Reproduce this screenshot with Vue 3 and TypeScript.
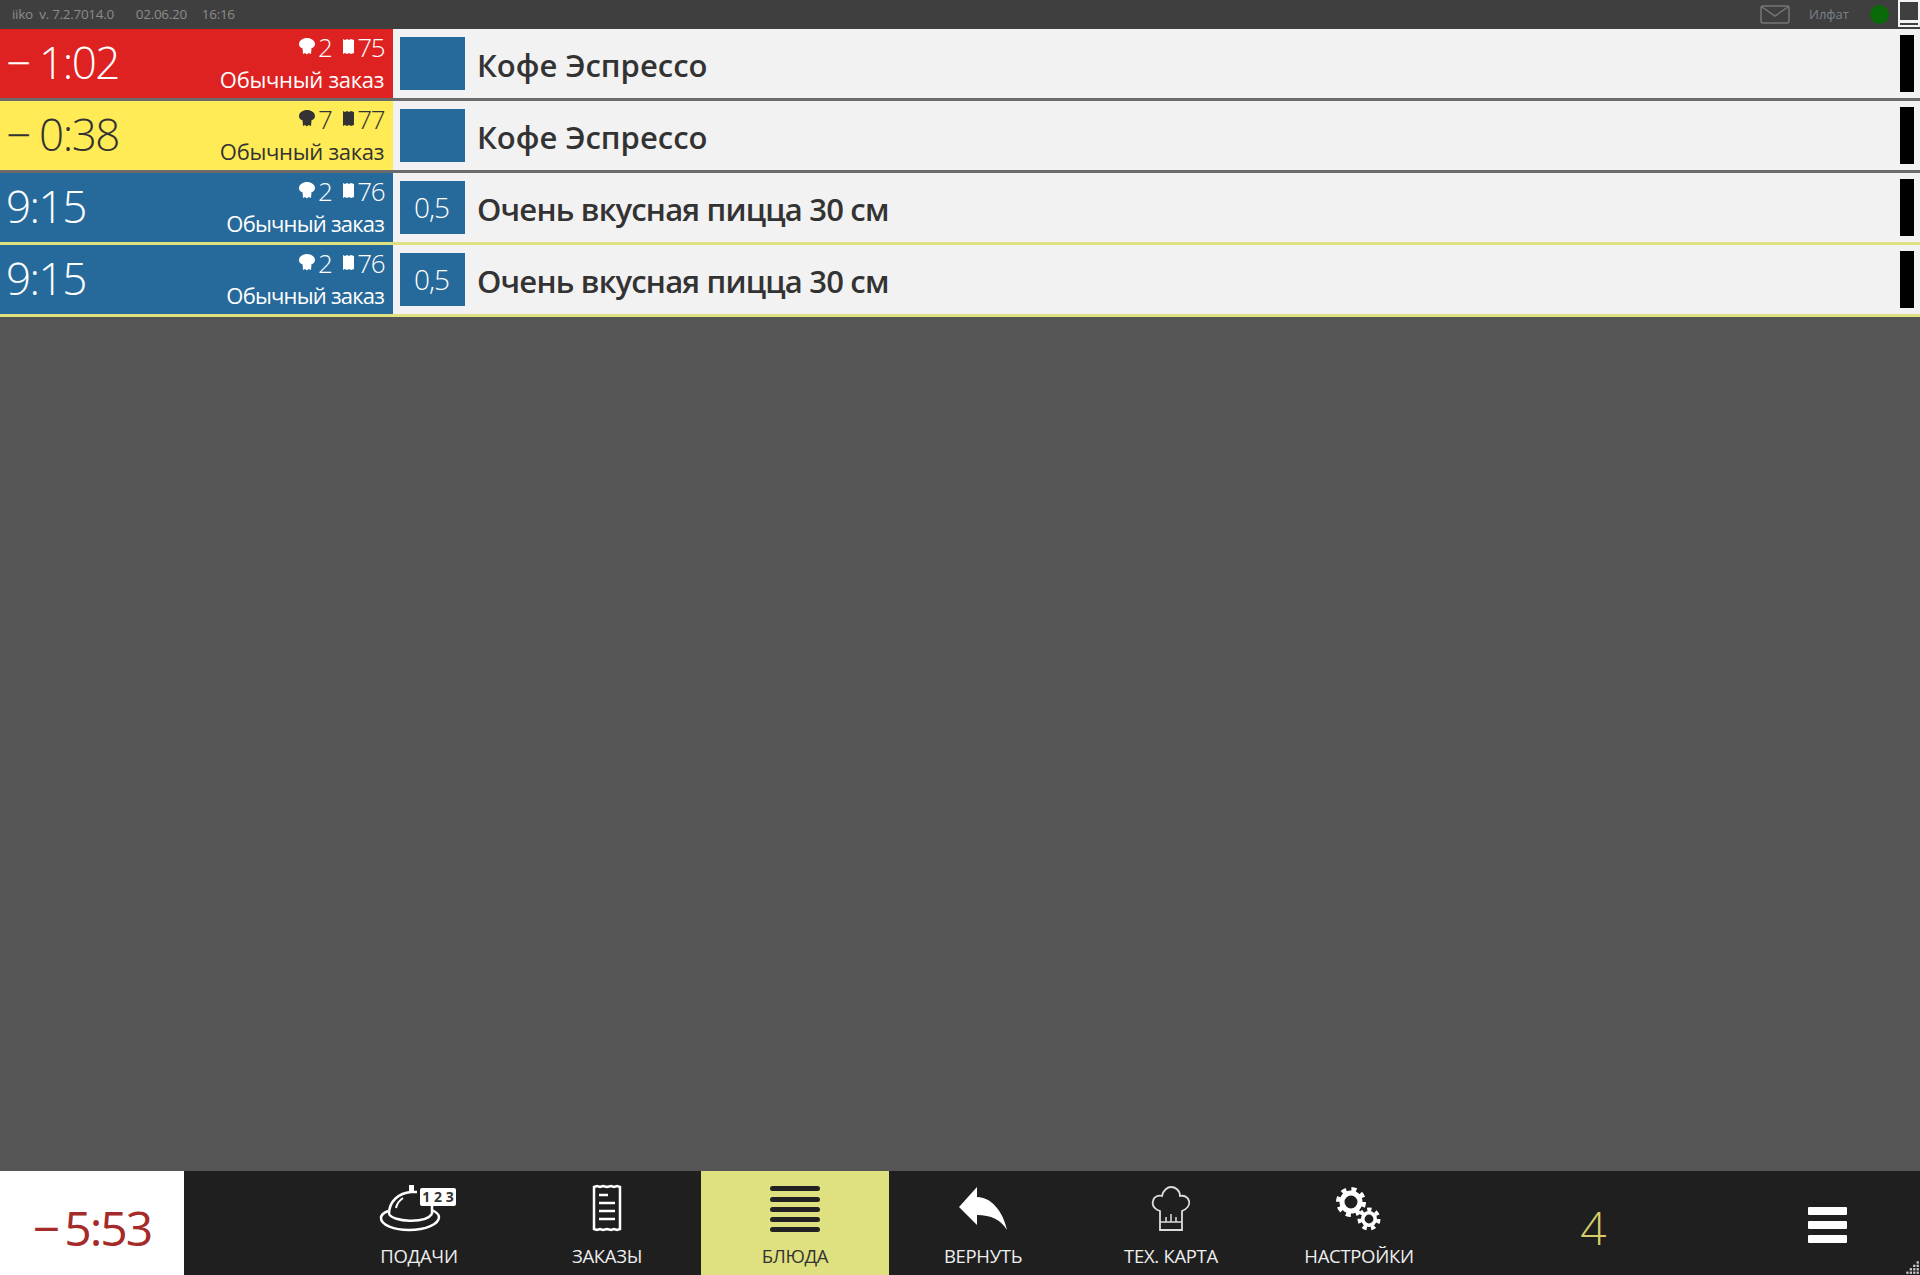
<template>
  <div class="screen">
    <header class="topbar">
      <div class="version">
        <span>iiko&nbsp; v. 7.2.7014.0</span>
        <span class="date">02.06.20</span>
        <span class="clock">16:16</span>
      </div>
      <div class="status">
        <svg class="mail" width="30" height="19" viewBox="0 0 30 19">
          <rect x="1" y="1" width="28" height="17" rx="2" fill="none" stroke="#777" stroke-width="1.5" />
          <path d="M2 2 L15 11 L28 2" fill="none" stroke="#777" stroke-width="1.5" />
        </svg>
        <span class="user">Илфат</span>
        <span class="online"></span>
        <span class="win-btn"><i></i></span>
      </div>
    </header>

    <main class="dishes">
      <div v-for="(row, i) in rows" :key="i" class="row" :class="row.sep">
        <div class="info" :class="row.color">
          <div class="time">{{ row.time }}</div>
          <div class="meta">
            <div class="numbers">
              <svg class="chef" width="16" height="17" viewBox="0 0 16 17">
                <path d="M8 0 C12 0 16 2.500 16 6 C16 8.500 14 10 12.500 10.300 L12 16 L9.500 15 L8 16.500 L6 15 L4 16 L3.500 10.300 C1.500 10 0 8.500 0 6 C0 2.500 4 0 8 0 Z" fill="currentColor" />
              </svg>
              <span class="num">{{ row.guests }}</span>
              <svg class="ticket" width="11" height="15" viewBox="0 0 11 15">
                <path d="M0 0 L2 1 L4 0 L6 1 L8 0 L11 1 L11 14 L8 15 L6 14 L4 15 L2 14 L0 15 Z" fill="currentColor" />
              </svg>
              <span class="num">{{ row.order }}</span>
            </div>
            <div class="kind">Обычный заказ</div>
          </div>
        </div>
        <div class="dish">
          <div class="qty">{{ row.qty }}</div>
          <div class="name">{{ row.name }}</div>
          <div class="marker"></div>
        </div>
      </div>
    </main>

    <footer class="bottom">
      <div class="timer">−&#8201;5:53</div>
      <nav class="nav">
        <div v-for="item in nav" :key="item.label" class="nav-item" :class="{ active: item.icon === 'dishes' }">
          <svg v-if="item.icon === 'bell'" width="120" height="60" viewBox="0 5 120 60">
            <path d="M29 41 C24 43 22 45 22 48 C22 55 35 60 50 60 C67 60 80 54 80 47 C80 44 77 42 73 40" fill="none" stroke="#fff" stroke-width="2.500" />
            <path d="M30 44 C34 52 66 54 73 44" fill="none" stroke="#fff" stroke-width="2.500" />
            <path d="M30 44 C30 31 40 23 52 22 L58 22" fill="none" stroke="#fff" stroke-width="2.500" />
            <path d="M73 36 V44" fill="none" stroke="#fff" stroke-width="2.500" />
            <path d="M37 38 C38 33 41 30 44 28" fill="none" stroke="#fff" stroke-width="2" />
            <rect x="50" y="15" width="5" height="6" fill="#fff" />
            <rect x="61" y="18" width="36" height="18" rx="2" fill="#fff" />
            <text x="79" y="32" class="bell-num" text-anchor="middle">1 2 3</text>
          </svg>
          <svg v-else-if="item.icon === 'orders'" width="34" height="60" viewBox="0 0 34 60">
            <path d="M4 12 L7 11 L10 12 L13 11 L17 12 L21 11 L24 12 L27 11 L30 12 V54 L27 55 L24 54 L21 55 L17 54 L13 55 L10 54 L7 55 L4 54 Z" fill="none" stroke="#fff" stroke-width="2.500" />
            <path d="M9 20 H18 M9 28 H25 M9 36 H25 M9 44 H25" stroke="#fff" stroke-width="2.500" />
          </svg>
          <svg v-else-if="item.icon === 'dishes'" width="50" height="60" viewBox="0 0 50 60">
            <rect v-for="y in [11, 22, 32, 42, 52]" :key="y" x="0" :y="y" width="50" height="5" rx="2.500" fill="#222" />
          </svg>
          <svg v-else-if="item.icon === 'back'" width="48" height="60" viewBox="0 0 48 60">
            <path d="M18 12 V22 C32 22 44 36 48 55 C42 45 32 40 18 40 V50 L0 32 Z" fill="#fff" />
          </svg>
          <svg v-else-if="item.icon === 'hat'" width="40" height="60" viewBox="0 0 40 60">
            <path d="M9 36 C3 34 1 30 2 26 C3 21 8 20 11 21 C12 15 17 12 20 12 C24 12 29 15 29 21 C33 20 37 22 38 26 C39 30 36 34 31 36 V55 H9 Z" fill="none" stroke="#ddd" stroke-width="1.800" />
            <path d="M9 47 H31 M15 47 V42 M20 47 V39 M25 47 V42" stroke="#ddd" stroke-width="1.500" />
          </svg>
          <svg v-else-if="item.icon === 'gears'" width="60" height="60" viewBox="199 5 60 60">
            <circle cx="221" cy="32" r="9" fill="none" stroke="#fff" stroke-width="5" />
            <circle cx="221" cy="32" r="12.500" fill="none" stroke="#fff" stroke-width="5" stroke-dasharray="4.900 4.920" />
            <circle cx="239" cy="49" r="6.200" fill="none" stroke="#fff" stroke-width="3.600" />
            <circle cx="239" cy="49" r="9.500" fill="none" stroke="#fff" stroke-width="4" stroke-dasharray="4.260 4.270" />
          </svg>
          <span class="nav-label">{{ item.label }}</span>
        </div>
      </nav>
      <div class="count">4</div>
      <div class="menu">
        <span></span>
        <span></span>
        <span></span>
      </div>
      <svg class="grip" width="16" height="16" viewBox="0 0 14 14">
        <rect v-for="d in grip" :key="d[0] + '-' + d[1]" :x="d[0]" :y="d[1]" width="2" height="2" fill="#ccc" />
      </svg>
    </footer>
  </div>
</template>

<script setup lang="ts">
interface Row {
  time: string
  guests: number
  order: number
  qty: string
  name: string
  color: string
  sep: string
}

const rows: Row[] = [
  { time: '−\u20051:02', guests: 2, order: 75, qty: '', name: 'Кофе Эспрессо', color: 'red', sep: 'sep-gray' },
  { time: '−\u20050:38', guests: 7, order: 77, qty: '', name: 'Кофе Эспрессо', color: 'yellow', sep: 'sep-gray' },
  { time: '9:15', guests: 2, order: 76, qty: '0,5', name: 'Очень вкусная пицца 30 см', color: 'blue', sep: 'sep-lime' },
  { time: '9:15', guests: 2, order: 76, qty: '0,5', name: 'Очень вкусная пицца 30 см', color: 'blue', sep: 'sep-lime' },
]

const nav = [
  { label: 'ПОДАЧИ', icon: 'bell' },
  { label: 'ЗАКАЗЫ', icon: 'orders' },
  { label: 'БЛЮДА', icon: 'dishes' },
  { label: 'ВЕРНУТЬ', icon: 'back' },
  { label: 'ТЕХ. КАРТА', icon: 'hat' },
  { label: 'НАСТРОЙКИ', icon: 'gears' },
]

// точки в углу (resize grip)
const grip = [[11, 2], [8, 5], [11, 5], [5, 8], [8, 8], [11, 8], [2, 11], [5, 11], [8, 11], [11, 11]]
</script>

<style>
html, body {
  margin: 0;
  background: #555;
}
</style>

<style scoped>
.screen {
  height: 100vh;
  display: flex;
  flex-direction: column;
  background: #555;
  font-family: "Open Sans", "Noto Sans", sans-serif;
  overflow: hidden;
}

.topbar {
  height: 28.5px;
  flex: none;
  display: flex;
  align-items: center;
  justify-content: space-between;
  background: #3f3f3f;
  color: #8c8c8c;
  font-size: 13.5px;
  letter-spacing: -0.3px;
}

.version {
  padding-left: 12px;
  display: flex;
}

.date {
  margin-left: 22px;
}

.clock {
  margin-left: 15px;
}

.status {
  display: flex;
  align-items: center;
}

.user {
  margin-left: 19px;
  width: 40px;
  font-size: 13px;
  color: #79808a;
  letter-spacing: 0;
}

.online {
  margin-left: 21px;
  width: 19px;
  height: 19px;
  border-radius: 50%;
  background: #0a6a0a;
}

.win-btn {
  margin-left: 9px;
  width: 18px;
  height: 21px;
  border: 2px solid #f4f4f4;
  display: flex;
  align-items: flex-end;
  padding: 0 0 2px;
  margin-top: -2px;
  box-sizing: content-box;
}

.win-btn i {
  flex: 1;
  height: 3px;
  background: #f4f4f4;
}

.dishes {
  flex: 1;
}

.row {
  height: 72px;
  box-sizing: border-box;
  display: flex;
  border-bottom: 3px solid #6b6b6b;
}

.row.sep-lime {
  border-bottom-color: #dfe07f;
}

.info {
  width: 393px;
  flex: none;
  display: flex;
  justify-content: space-between;
  padding: 0 9px 0 6px;
  box-sizing: border-box;
  color: #fff;
}

.info.red {
  background: #de2222;
}

.info.yellow {
  background: #ffeb55;
  color: #333;
}

.info.blue {
  background: #266a9b;
}

.time {
  font-size: 44px;
  font-weight: 350;
  line-height: 66px;
  letter-spacing: -1.5px;
}

.meta {
  text-align: right;
}

.numbers {
  margin-top: 1px;
  height: 34px;
  display: flex;
  align-items: center;
  justify-content: flex-end;
  font-size: 26px;
  font-weight: 300;
  letter-spacing: -1.5px;
}

.chef {
  margin-right: 3px;
}

.ticket {
  margin: 0 3px 0 12px;
}

.kind {
  font-size: 22px;
  line-height: 30px;
  font-weight: 400;
  letter-spacing: -0.3px;
}

.blue .kind {
  letter-spacing: -0.8px;
}

.dish {
  flex: 1;
  display: flex;
  align-items: center;
  padding: 0 6px 0 7px;
  background: #f2f2f2;
  color: #333;
}

.qty {
  width: 65px;
  height: 53px;
  flex: none;
  display: flex;
  align-items: center;
  justify-content: center;
  padding-right: 2px;
  box-sizing: border-box;
  background: #266a9b;
  color: #fff;
  font-size: 28px;
  font-weight: 350;
  letter-spacing: -1px;
}

.name {
  flex: 1;
  margin: 3px 0 0 12px;
  font-size: 31px;
  font-weight: 600;
}

.sep-lime .name {
  letter-spacing: -0.8px;
}

.marker {
  width: 14px;
  height: 57px;
  background: #000;
}

.bottom {
  position: relative;
  height: 104px;
  flex: none;
  display: flex;
  background: #1f1f1f;
  color: #fff;
}

.timer {
  width: 184px;
  flex: none;
  display: flex;
  align-items: center;
  justify-content: center;
  padding-top: 8px;
  box-sizing: border-box;
  background: #fff;
  color: #a52a2a;
  font-size: 48px;
  font-weight: 500;
  letter-spacing: -2px;
}

.nav {
  margin-left: 141px;
  display: flex;
  flex: none;
}

.nav-item {
  width: 188px;
  display: flex;
  flex-direction: column;
  align-items: center;
  padding-top: 4px;
  box-sizing: border-box;
}

.nav-item.active {
  background: #dfe07f;
  color: #333;
}

.nav-label {
  margin-top: 8px;
  font-size: 18.5px;
  letter-spacing: -0.3px;
  color: #eee;
}

.nav-item.active .nav-label {
  color: #333;
}

.bell-num {
  font-family: "Open Sans", sans-serif;
  font-size: 14px;
  font-weight: 700;
  fill: #333;
}

.count {
  flex: 1;
  display: flex;
  align-items: center;
  justify-content: center;
  padding-top: 8px;
  color: #d8cc6a;
  font-size: 46px;
  font-weight: 300;
}

.menu {
  width: 186px;
  flex: none;
  display: flex;
  flex-direction: column;
  align-items: center;
  justify-content: center;
  padding-top: 4px;
  box-sizing: border-box;
  gap: 6px;
}

.menu span {
  width: 39px;
  height: 8px;
  background: #fff;
  border-radius: 1px;
}

.grip {
  position: absolute;
  right: 0;
  bottom: 0;
}
</style>
